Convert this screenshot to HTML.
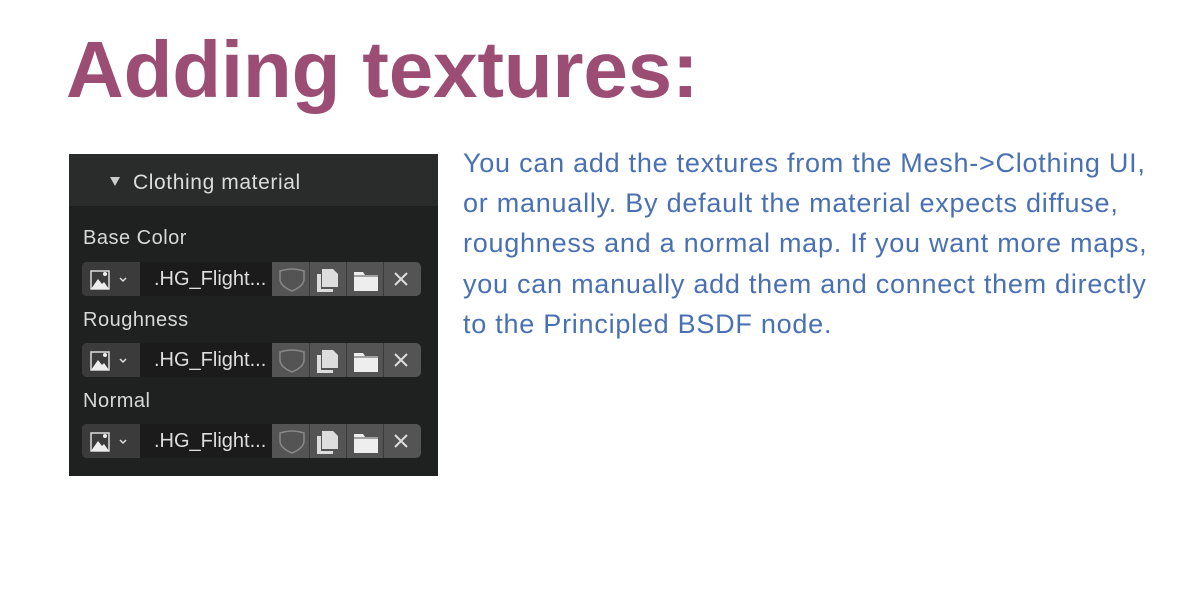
<!DOCTYPE html>
<html><head><style>
body{margin:0;width:1200px;height:600px;background:#fff;position:relative;overflow:hidden;font-family:"Liberation Sans",sans-serif}
h1{position:absolute;left:66px;top:22px;margin:0;font-size:80px;font-weight:bold;color:#9b4d74;letter-spacing:-0.2px;line-height:96px;white-space:nowrap}
.p{position:absolute;left:463px;top:143px;color:#4a70b4;font-size:27px;line-height:40.2px;white-space:nowrap;letter-spacing:0.75px}
.panel{position:absolute;left:69px;top:154px;width:369px;height:322px;background:#1f2020}
.hd{position:absolute;left:0;top:0;width:369px;height:52px;background:#2a2b2b;color:#dcdcdc;font-size:21px;letter-spacing:0.6px}
.hd span{position:absolute;left:64px;top:17px}
.hd i{position:absolute;left:41px;top:23px;width:0;height:0;border-left:5px solid transparent;border-right:5px solid transparent;border-top:9px solid #ccc}
.lbl{position:absolute;left:14px;color:#d8d8d8;font-size:20px;letter-spacing:0.5px}
.f{position:absolute;left:13px;width:339px;height:34px;background:#545454;border-radius:5px;overflow:hidden}
.f .ic{position:absolute;left:0;top:0;width:57px;height:34px;background:#3b3b3b}
.f .tx{position:absolute;left:58px;top:0;width:132px;height:34px;background:#1b1b1b;color:#dedede;font-size:20px;line-height:34px;text-indent:14px}
.f .sep{position:absolute;top:0;width:1px;height:34px;background:#3a3a3a}
.f svg{position:absolute}
</style></head><body>
<h1>Adding textures:</h1>
<div class="p">You can add the textures from the Mesh-&gt;Clothing UI,<br>or manually. By default the material expects diffuse,<br>roughness and a normal map. If you want more maps,<br>you can manually add them and connect them directly<br>to the Principled BSDF node.</div>
<div class="panel">
<div class="hd"><i></i><span>Clothing material</span></div>
<div class="lbl" style="top:73px">Base Color</div>
<div class="lbl" style="top:155px">Roughness</div>
<div class="lbl" style="top:236px">Normal</div>
<div class="f" style="top:108px">
<div class="ic"></div><div class="tx">.HG_Flight...</div>
<div class="sep" style="left:57px"></div><div class="sep" style="left:227px"></div><div class="sep" style="left:264px"></div><div class="sep" style="left:301px"></div>
<svg width="339" height="34"><path d="M9 9h18v18h-18z" fill="none" stroke="#ddd" stroke-width="1.5"/><path d="M9 27l7-10 4 5 2-2 5 7z" fill="#eee"/><circle cx="23" cy="12" r="2" fill="#eee"/><path d="M38 16l3 3 3-3" fill="none" stroke="#ddd" stroke-width="1.5"/>
<path d="M198 9q7-2 12-2q5 0 12 2v8q0 7-12 12q-12-5-12-12z" fill="none" stroke="#888" stroke-width="1.5"/>
<path d="M235 12h4v15h12v3h-16z" fill="#ddd"/><path d="M240 7h11l5 5v13h-16z" fill="#ddd"/>
<path d="M272 10h9l2 3h13v16h-24z" fill="#eee"/><path d="M272 14h24" stroke="#545454"/>
<path d="M313 11l12 12M325 11l-12 12" stroke="#ddd" stroke-width="2"/></svg></div>
<div class="f" style="top:189px">
<div class="ic"></div><div class="tx">.HG_Flight...</div>
<div class="sep" style="left:57px"></div><div class="sep" style="left:227px"></div><div class="sep" style="left:264px"></div><div class="sep" style="left:301px"></div>
<svg width="339" height="34"><path d="M9 9h18v18h-18z" fill="none" stroke="#ddd" stroke-width="1.5"/><path d="M9 27l7-10 4 5 2-2 5 7z" fill="#eee"/><circle cx="23" cy="12" r="2" fill="#eee"/><path d="M38 16l3 3 3-3" fill="none" stroke="#ddd" stroke-width="1.5"/>
<path d="M198 9q7-2 12-2q5 0 12 2v8q0 7-12 12q-12-5-12-12z" fill="none" stroke="#888" stroke-width="1.5"/>
<path d="M235 12h4v15h12v3h-16z" fill="#ddd"/><path d="M240 7h11l5 5v13h-16z" fill="#ddd"/>
<path d="M272 10h9l2 3h13v16h-24z" fill="#eee"/><path d="M272 14h24" stroke="#545454"/>
<path d="M313 11l12 12M325 11l-12 12" stroke="#ddd" stroke-width="2"/></svg></div>
<div class="f" style="top:270px">
<div class="ic"></div><div class="tx">.HG_Flight...</div>
<div class="sep" style="left:57px"></div><div class="sep" style="left:227px"></div><div class="sep" style="left:264px"></div><div class="sep" style="left:301px"></div>
<svg width="339" height="34"><path d="M9 9h18v18h-18z" fill="none" stroke="#ddd" stroke-width="1.5"/><path d="M9 27l7-10 4 5 2-2 5 7z" fill="#eee"/><circle cx="23" cy="12" r="2" fill="#eee"/><path d="M38 16l3 3 3-3" fill="none" stroke="#ddd" stroke-width="1.5"/>
<path d="M198 9q7-2 12-2q5 0 12 2v8q0 7-12 12q-12-5-12-12z" fill="none" stroke="#888" stroke-width="1.5"/>
<path d="M235 12h4v15h12v3h-16z" fill="#ddd"/><path d="M240 7h11l5 5v13h-16z" fill="#ddd"/>
<path d="M272 10h9l2 3h13v16h-24z" fill="#eee"/><path d="M272 14h24" stroke="#545454"/>
<path d="M313 11l12 12M325 11l-12 12" stroke="#ddd" stroke-width="2"/></svg></div>
</div>
</body></html>
